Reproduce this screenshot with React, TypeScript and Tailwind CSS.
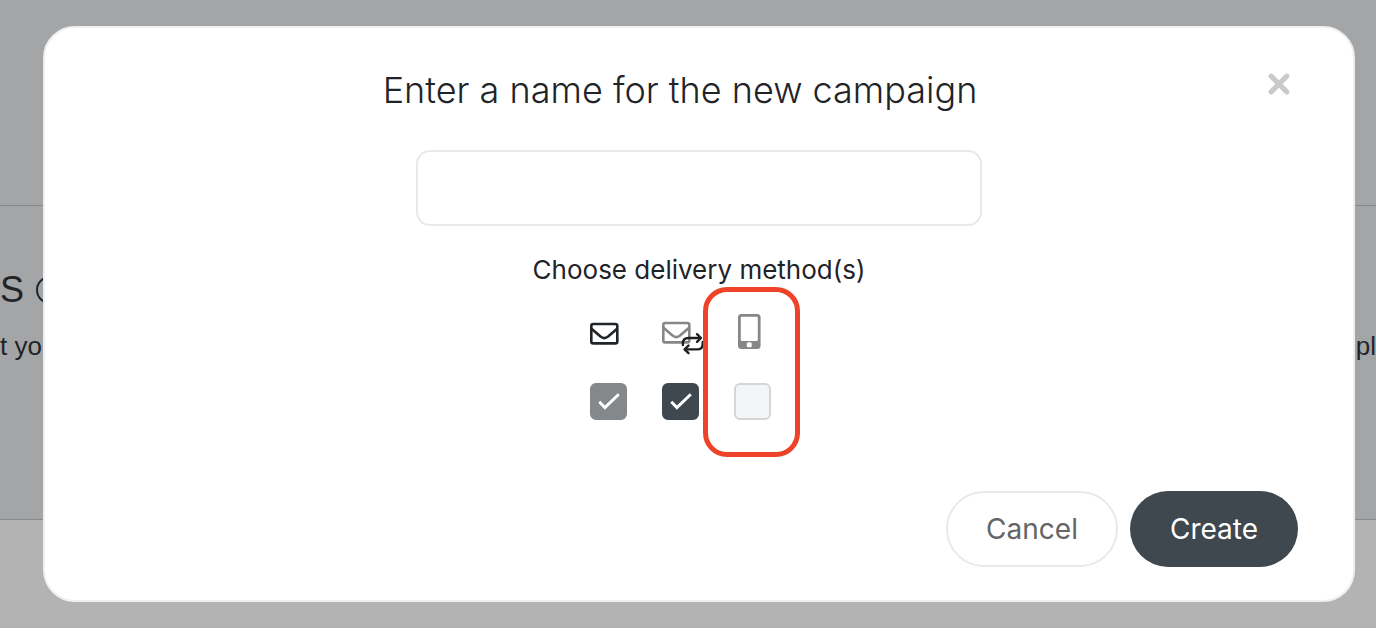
import { useState } from "react";
import type { FormEvent, ReactNode } from "react";

function EmailIcon() {
    return (
        <svg viewBox="0 0 48 44" className="w-12 h-11" fill="none" stroke="#1f2428" strokeWidth="2.6" aria-hidden="true">
            <rect x="1.3" y="11" width="26" height="19.4" rx="2" />
            <path d="M1.5 15.8 L10.5 23.6 Q14.3 26.6 18.1 23.6 L27.1 15.8" />
        </svg>
    );
}

function RecurringEmailIcon() {
    return (
        <svg viewBox="0 0 48 44" className="w-12 h-11" fill="none" aria-hidden="true">
            <g stroke="#858789" strokeWidth="2.6">
                <rect x="1.3" y="10" width="26" height="19.4" rx="2" />
                <path d="M1.5 14.8 L10.5 22.6 Q14.3 25.6 18.1 22.6 L27.1 14.8" />
            </g>
            <g stroke="#1f2021" strokeWidth="2.4" strokeLinecap="round" strokeLinejoin="round">
                <path d="M20.9 32 V30.5 Q20.9 25 26.5 25 H38.6" />
                <path d="M35 21.2 L38.9 25 L35 28.8" />
                <path d="M40.7 29 V31 Q40.7 36.4 35.2 36.4 H23" />
                <path d="M26.5 32.6 L22.6 36.4 L26.5 40.2" />
            </g>
        </svg>
    );
}

function MobileIcon() {
    return (
        <svg viewBox="0 0 48 44" className="w-12 h-11" aria-hidden="true">
            <rect x="4" y="1" width="22.6" height="35" rx="3.5" fill="#858789" />
            <rect x="6.8" y="3.7" width="17" height="24.2" rx="1" fill="#ffffff" />
            <rect x="12.8" y="29.3" width="5" height="5" rx="1.5" fill="#ffffff" />
        </svg>
    );
}

function DeliveryMethod({
    label,
    icon,
    checked,
    disabled = false,
    highlighted = false,
    onChange,
}: {
    label: string;
    icon: ReactNode;
    checked: boolean;
    disabled?: boolean;
    highlighted?: boolean;
    onChange?: () => void;
}) {
    return (
        <label className="relative flex flex-col items-start w-[72px]">
            {icon}
            <span className="relative mt-[26px] w-[37px] h-[37px]">
                <input
                    type="checkbox"
                    aria-label={label}
                    checked={checked}
                    disabled={disabled}
                    onChange={onChange}
                    className="block w-full h-full appearance-none rounded-md border-2 border-[#d5d5d5] bg-[#f4f5f7] checked:border-[#3f474f] checked:bg-[#3f474f] disabled:border-[#84888b] disabled:bg-[#84888b]"
                />
                {checked && (
                    <svg
                        viewBox="0 0 37 37"
                        className="absolute inset-0 pointer-events-none"
                        fill="none"
                        stroke="#ffffff"
                        strokeWidth="2.9"
                        aria-hidden="true"
                    >
                        <path d="M9.3 18.8 L14.9 24.6 L28.8 11.2" />
                    </svg>
                )}
            </span>
            {highlighted && (
                <span className="absolute -top-[26px] -left-[31px] w-[97px] h-[170px] rounded-3xl border-5 border-[#ee4328] pointer-events-none" />
            )}
        </label>
    );
}

export default function App() {
    const [name, setName] = useState("");
    const [recurring, setRecurring] = useState(true);
    const [mobile, setMobile] = useState(false);

    function handleSubmit(e: FormEvent) {
        e.preventDefault();
    }

    return (
        <div className="relative min-h-screen overflow-hidden bg-[#b3b3b3] font-[Inter,'Liberation_Sans',sans-serif] text-[#1f2428]">
            {/* Page behind the modal */}
            <div className="h-[205px] bg-[#a4a5a7]" />
            <section className="h-[315px] border-y border-[#87888a] bg-[#a4a5a7] pt-[60px] font-['Liberation_Sans',sans-serif]">
                <div className="flex items-center gap-3 text-4xl leading-12">
                    <span>S</span>
                    <svg viewBox="0 0 28 28" className="w-7 h-7" fill="none" stroke="#1f2428" strokeWidth="2" aria-hidden="true">
                        <circle cx="14" cy="14" r="13" />
                    </svg>
                </div>
                <div className="mt-3.5 flex justify-between text-[26px] leading-9">
                    <span>t yo</span>
                    <span>pl</span>
                </div>
            </section>

            {/* Modal */}
            <div className="absolute inset-0 flex items-center pl-[43px] pr-[21px]">
                <form
                    role="dialog"
                    aria-labelledby="modal-title"
                    onSubmit={handleSubmit}
                    className="flex-1 flex flex-col rounded-4xl border-2 border-[#efeff0] bg-white px-[55px] pt-[38px] pb-[33px]"
                >
                    <div className="flex items-start">
                        <h1 id="modal-title" className="flex-1 text-center text-4xl leading-12 font-light">
                            Enter a name for the new campaign
                        </h1>
                        <button type="button" aria-label="Close" className="flex items-center justify-center w-[38px] h-9">
                            <svg viewBox="0 0 22 22" className="w-[22px]" stroke="#c9cbcb" strokeWidth="5.2" strokeLinecap="round" aria-hidden="true">
                                <path d="M3.2 3.2 L18.8 18.8 M18.8 3.2 L3.2 18.8" />
                            </svg>
                        </button>
                    </div>

                    <input
                        type="text"
                        aria-labelledby="modal-title"
                        value={name}
                        onChange={(e) => setName(e.target.value)}
                        className="self-center mt-9 w-full max-w-[566px] h-[76px] px-6 rounded-[14px] border-2 border-[#e9e9e9] text-[26px] focus:outline-none"
                    />

                    <fieldset className="mt-7">
                        <legend className="w-full text-center text-[26px] leading-8">
                            Choose delivery method(s)
                        </legend>
                        <div className="mt-[27px] flex justify-center pr-0.5">
                            <DeliveryMethod label="Email" icon={<EmailIcon />} checked disabled />
                            <DeliveryMethod
                                label="Recurring email"
                                icon={<RecurringEmailIcon />}
                                checked={recurring}
                                onChange={() => setRecurring(!recurring)}
                            />
                            <DeliveryMethod
                                label="Mobile"
                                icon={<MobileIcon />}
                                checked={mobile}
                                onChange={() => setMobile(!mobile)}
                                highlighted
                            />
                        </div>
                    </fieldset>

                    <div className="mt-[71px] flex justify-end gap-3 text-[28px]">
                        <button type="button" className="h-[76px] px-[38px] rounded-full border-2 border-[#e9e9e9] text-[#636566]">
                            Cancel
                        </button>
                        <button type="submit" className="h-[76px] px-10 rounded-full bg-[#3f474f] text-white">
                            Create
                        </button>
                    </div>
                </form>
            </div>
        </div>
    );
}
